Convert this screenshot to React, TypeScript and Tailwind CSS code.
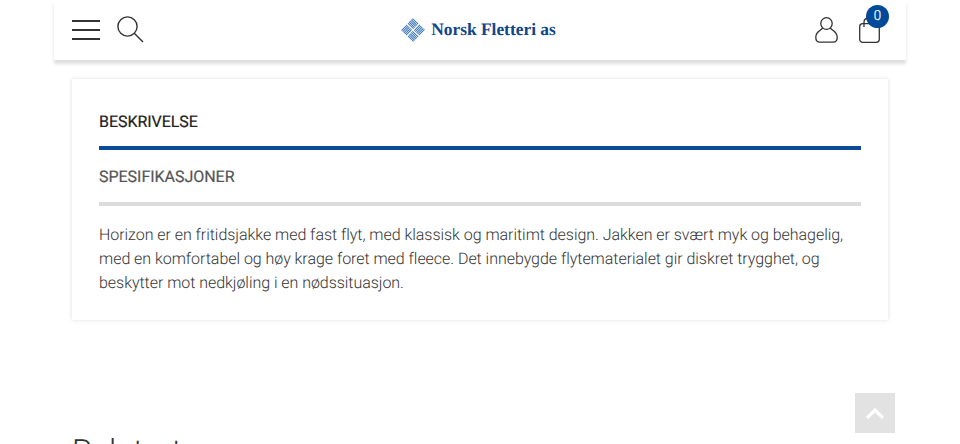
const offs = [0.8, 2.4, 4, 5.6, 7.2];

function Logo() {
  return (
    <svg width="24" height="24" viewBox="0 0 24 24" fill="none" stroke="#3a75b8" strokeWidth="1">
      <g transform="rotate(45 12 12)">
        <g transform="translate(3.5 3.5)">
          {offs.map((o) => (
            <path key={o} d={`M0 ${o} H8`} />
          ))}
        </g>
        <g transform="translate(12.5 3.5)">
          {offs.map((o) => (
            <path key={o} d={`M${o} 0 V8`} />
          ))}
        </g>
        <g transform="translate(3.5 12.5)">
          {offs.map((o) => (
            <path key={o} d={`M${o} 0 V8`} />
          ))}
        </g>
        <g transform="translate(12.5 12.5)">
          {offs.map((o) => (
            <path key={o} d={`M0 ${o} H8`} />
          ))}
        </g>
      </g>
    </svg>
  );
}

export default function App() {
  return (
    <div className="h-[444px] w-[960px] overflow-hidden bg-white font-['Roboto',sans-serif] text-[#333] [text-rendering:geometricPrecision]">
      <header className="mx-[54px] flex h-[60px] items-center justify-between bg-white pl-[18px] pr-[26px] shadow-[0_4px_3px_rgba(0,0,0,0.13)]">
        <div className="flex w-[200px] items-center gap-[17px]">
          <div className="flex h-[20px] w-[28px] flex-col justify-between">
            <span className="h-[2px] bg-[#333]" />
            <span className="h-[2px] bg-[#333]" />
            <span className="h-[2px] bg-[#333]" />
          </div>
          <svg className="-mt-[1px]" width="27" height="27" viewBox="0 0 27 27" fill="none" stroke="#333" strokeWidth="1.4">
            <circle cx="10.5" cy="10.5" r="9.6" />
            <path d="M17.5 17.5 L26 26" />
          </svg>
        </div>
        <div className="flex items-center gap-[6px] pl-[5px]">
          <Logo />
          <span className="font-['Liberation_Serif',serif] text-[17.4px] font-bold leading-none text-[#10458a]">Norsk Fletteri as</span>
        </div>
        <div className="flex w-[200px] items-center justify-end gap-[21px]">
          <svg width="23" height="26" viewBox="0 0 23 26" fill="none" stroke="#333" strokeWidth="1.3">
            <ellipse cx="11.5" cy="6.5" rx="5.7" ry="5.8" />
            <path d="M7.5 11 C6.5 13.5 1 14 0.8 20 C0.7 23.5 2 25.2 5 25.2 L18 25.2 C21 25.2 22.3 23.5 22.2 20 C22 14 16.5 13.5 15.5 11" />
          </svg>
          <div className="relative h-[26px] w-[21px]">
            <svg width="21" height="26" viewBox="0 0 21 26" fill="none" stroke="#333" strokeWidth="1.3">
              <rect x="0.7" y="6.7" width="19.6" height="18.6" rx="3" />
              <path d="M5 10 V5 C5 2 7 1 10.5 1 C14 1 16 2 16 5 V8" />
            </svg>
            <span className="absolute left-[7px] top-[-12px] flex h-[23px] w-[23px] items-center justify-center rounded-full bg-[#004a99] text-[14px] text-[#dfe9f5]">0</span>
          </div>
        </div>
      </header>
      <main className="mx-[72px] mt-[19px]">
        <section className="h-[241px] bg-white px-[27px] pt-[30px] shadow-[0_0_4px_rgba(0,0,0,0.14)]">
          <h3 className="h-[37px] text-[16px] font-normal leading-[25px] tracking-[-0.05px] text-[#222] [-webkit-text-stroke:0.2px]">BESKRIVELSE</h3>
          <div className="h-[4px] bg-[#0a4a96]" />
          <h3 className="mt-[15px] h-[37px] text-[16px] font-normal leading-[24px] tracking-[-0.03px] text-[#555] [-webkit-text-stroke:0.2px]">SPESIFIKASJONER</h3>
          <div className="h-[4px] bg-[#dcdcdc]" />
          <p className="mt-[17px] text-[16px] font-light leading-[24px] tracking-[-0.04px] text-[#333]">
            Horizon er en fritidsjakke med fast flyt, med klassisk og maritimt design. Jakken er svært myk og behagelig, med en komfortabel og høy krage foret med fleece. Det innebygde flytematerialet gir diskret trygghet, og beskytter mot nedkjøling i en nødssituasjon.
          </p>
        </section>
        <h2 className="mt-[110px] text-[32px] font-light leading-[43px] text-[#333]">Relatert</h2>
      </main>
      <div className="fixed left-[855px] top-[393px] flex h-[40px] w-[40px] items-center justify-center bg-[#e2e2e2]">
        <svg width="20" height="12" viewBox="0 0 20 12" fill="none" stroke="#fff" strokeWidth="3.2">
          <path d="M2 11 L10 3 L18 11" />
        </svg>
      </div>
    </div>
  );
}
